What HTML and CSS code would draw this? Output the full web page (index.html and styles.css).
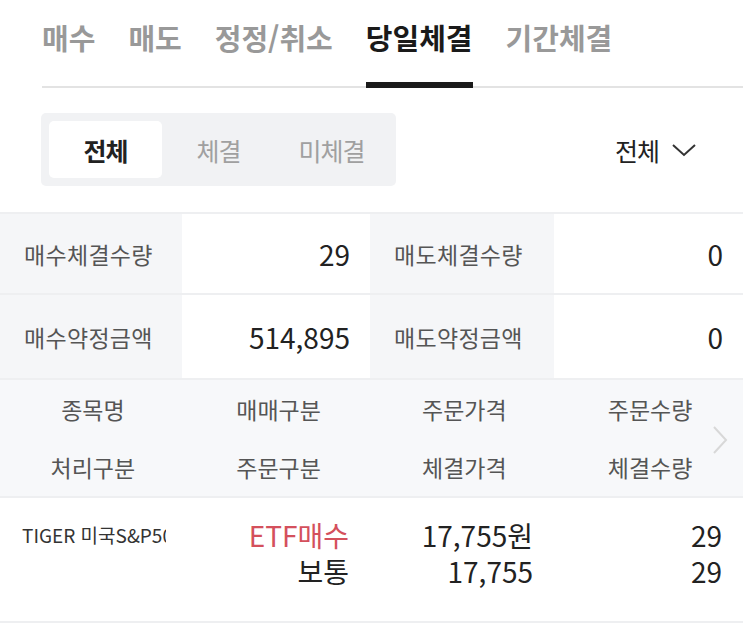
FILE: index.html
```html
<!DOCTYPE html>
<html lang="ko">
<head>
<meta charset="utf-8">
<link rel="stylesheet" href="styles.css">
</head>
<body>
<nav class="tabs">
  <span class="tab">매수</span>
  <span class="tab">매도</span>
  <span class="tab">정정/취소</span>
  <span class="tab active">당일체결</span>
  <span class="tab">기간체결</span>
</nav>

<div class="filter-row">
  <div class="seg">
    <span class="seg-item active">전체</span>
    <span class="seg-item">체결</span>
    <span class="seg-item">미체결</span>
  </div>
  <div class="dropdown">
    <span>전체</span>
    <svg class="dd-icon" width="26" height="16" viewBox="0 0 26 16"><path d="M2 3 L13 13 L24 3" fill="none" stroke="#333" stroke-width="2"/></svg>
  </div>
</div>

<section class="summary">
  <div class="s-label">매수체결수량</div>
  <div class="s-value">29</div>
  <div class="s-label">매도체결수량</div>
  <div class="s-value">0</div>
  <div class="s-label">매수약정금액</div>
  <div class="s-value">514,895</div>
  <div class="s-label">매도약정금액</div>
  <div class="s-value">0</div>
</section>

<section class="head">
  <div class="h-cell">종목명</div>
  <div class="h-cell">매매구분</div>
  <div class="h-cell">주문가격</div>
  <div class="h-cell">주문수량</div>
  <div class="h-cell">처리구분</div>
  <div class="h-cell">주문구분</div>
  <div class="h-cell">체결가격</div>
  <div class="h-cell">체결수량</div>
  <svg class="more" width="18" height="30" viewBox="0 0 18 30"><path d="M3 2 L15 15 L3 28" fill="none" stroke="#d8d8d8" stroke-width="2"/></svg>
</section>

<section class="row">
  <div class="d-name">TIGER 미국S&amp;P500</div>
  <div class="d-cell red">ETF매수</div>
  <div class="d-cell">17,755원</div>
  <div class="d-cell">29</div>
  <div class="d-cell"></div>
  <div class="d-cell">보통</div>
  <div class="d-cell">17,755</div>
  <div class="d-cell">29</div>
</section>
</body>
</html>
```

FILE: styles.css
```css
* { box-sizing: border-box; }
body {
  margin: 0;
  background: #fff;
  font-family: "Noto Sans CJK KR", "Noto Sans", sans-serif;
  color: #222;
  width: 743px;
  overflow: hidden;
}
.tabs {
  display: flex;
  gap: 33px;
  margin-left: 42px;
  height: 88px;
  border-bottom: 2px solid #e3e3e3;
}
.tab {
  font-size: 29px;
  font-weight: 700;
  color: #999;
  line-height: 40px;
  padding-top: 17px;
}
.tab.active {
  color: #1a1a1a;
  border-bottom: 6px solid #1a1a1a;
  margin-bottom: -2px;
}
.filter-row {
  display: flex;
  justify-content: space-between;
  align-items: center;
  margin: 25px 46px 26px 41px;
}
.seg {
  display: flex;
  width: 355px;
  height: 73px;
  padding: 8px;
  background: #f1f2f4;
  border-radius: 5px;
}
.seg-item {
  flex: 1;
  display: flex;
  align-items: center;
  justify-content: center;
  font-size: 25px;
  letter-spacing: -1px;
  color: #a0a0a0;
  border-radius: 5px;
}
.seg-item.active {
  background: #fff;
  color: #222;
  font-weight: 700;
}
.dropdown {
  display: flex;
  align-items: center;
  gap: 12px;
  font-size: 25px;
  letter-spacing: -1px;
  color: #222;
}
.summary {
  display: grid;
  grid-template-columns: 182px 188px 184px 1fr;
  grid-template-rows: 81px 85px;
  border-top: 2px solid #eeeff1;
}
.s-label, .s-value {
  display: flex;
  align-items: center;
  border-bottom: 2px solid #eeeff1;
}
.s-label {
  background: #f5f6f8;
  padding-left: 24px;
  font-size: 23px;
  letter-spacing: 0.3px;
  color: #555;
}
.s-value {
  justify-content: flex-end;
  padding-right: 20px;
  font-size: 28px;
  color: #222;
}
.head {
  position: relative;
  display: grid;
  grid-template-columns: repeat(4, 1fr);
  grid-auto-rows: 58px;
  background: #f7f8fa;
  border-bottom: 2px solid #eeeff1;
}
.h-cell {
  display: flex;
  align-items: center;
  justify-content: center;
  font-size: 23px;
  color: #555;
}
.more {
  position: absolute;
  right: 14px;
  top: 45px;
}
.row {
  display: grid;
  grid-template-columns: 182px 188px 184px 1fr;
  grid-auto-rows: 36px;
  padding: 19px 0 32px;
  border-bottom: 2px solid #eeeff1;
}
.d-name {
  font-size: 19px;
  line-height: 36px;
  color: #333;
  padding-left: 22px;
  width: 166px;
  white-space: nowrap;
  overflow: hidden;
}
.d-cell {
  display: flex;
  align-items: center;
  justify-content: flex-end;
  padding-right: 21px;
  font-size: 28px;
  line-height: 34px;
  color: #222;
}
.d-cell.red { color: #d4505c; }
```
